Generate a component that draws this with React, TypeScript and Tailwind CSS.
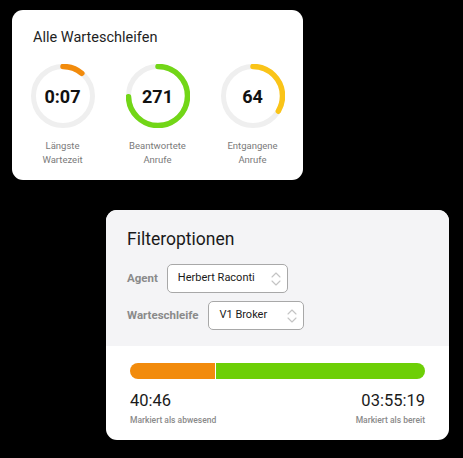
import React from "react";

function Ring({ pct, color, value }: { pct: number; color: string; value: string }) {
  const r = 29.5;
  const c = 2 * Math.PI * r;
  return (
    <div className="relative h-[64px] w-[64px]">
      <svg width="64" height="64" viewBox="0 0 64 64" className="absolute inset-0">
        <circle cx="32" cy="32" r={r} fill="none" stroke="#efefef" strokeWidth="5" />
        <circle
          cx="32"
          cy="32"
          r={r}
          fill="none"
          stroke={color}
          strokeWidth="5.5"
          strokeLinecap="round"
          strokeDasharray={`${c * pct} ${c}`}
          transform="rotate(-90 32 32)"
        />
      </svg>
      <div className="absolute inset-0 flex items-center justify-center text-[18px] font-bold text-[#111]">
        {value}
      </div>
    </div>
  );
}

function Stat({ pct, color, value, l1, l2 }: { pct: number; color: string; value: string; l1: string; l2: string }) {
  return (
    <div className="flex flex-col items-center">
      <Ring pct={pct} color={color} value={value} />
      <div className="mt-[11px] text-center text-[9.5px] leading-[14px] text-[#7a7a7a]">
        <div>{l1}</div>
        <div>{l2}</div>
      </div>
    </div>
  );
}

function Chevrons() {
  return (
    <svg width="12" height="16" viewBox="0 0 12 16" fill="none" stroke="#c4c4c4" strokeWidth="1.1" strokeLinecap="round" strokeLinejoin="round">
      <path d="M2 6 L6 2 L10 6" />
      <path d="M2 10 L6 14 L10 10" />
    </svg>
  );
}

function Select({ text, w }: { text: string; w: string }) {
  return (
    <div className={`flex h-[29px] items-center justify-between rounded-[5px] border border-[#a8a8a8] bg-white pl-[10px] pr-[5px] ${w}`}>
      <span className="text-[11px] text-[#1a1a1a]">{text}</span>
      <Chevrons />
    </div>
  );
}

export default function App() {
  return (
    <div className="h-[458px] w-[463px] overflow-hidden bg-black" style={{ fontFamily: "Roboto, 'Noto Sans', sans-serif" }}>
      <div className="ml-[12px] pt-[10px]">
        <div className="h-[170px] w-[291px] rounded-[11px] bg-white pt-[19px]">
          <div className="pl-[21px] text-[14.5px] leading-[18px] text-[#1f1f1f]">Alle Warteschleifen</div>
          <div className="mt-[17px] grid w-[288px] grid-cols-3 pl-[3px]">
            <Stat pct={0.11} color="#f28b0c" value="0:07" l1="Längste" l2="Wartezeit" />
            <Stat pct={0.745} color="#72d617" value="271" l1="Beantwortete" l2="Anrufe" />
            <Stat pct={0.335} color="#fac418" value="64" l1="Entgangene" l2="Anrufe" />
          </div>
        </div>
      </div>
      <div className="ml-[106px] mt-[30px] h-[230px] w-[343px] overflow-hidden rounded-[11px] bg-white">
        <div className="h-[136px] bg-[#f4f4f6] pl-[21px] pt-[18px]">
          <div className="text-[17.5px] leading-[22px] text-[#1a1a1a]">Filteroptionen</div>
          <div className="mt-[14px] flex items-center gap-[9px]">
            <span className="text-[11.5px] font-bold text-[#8a8a8a]">Agent</span>
            <Select text="Herbert Raconti" w="w-[121px]" />
          </div>
          <div className="mt-[8px] flex items-center gap-[10px]">
            <span className="text-[11.5px] font-bold text-[#8a8a8a]">Warteschleife</span>
            <Select text="V1 Broker" w="w-[96px]" />
          </div>
        </div>
        <div className="px-[24px] pt-[17px]">
          <div className="flex h-[16px] w-[295px] overflow-hidden rounded-full">
            <div className="h-full w-[85px] bg-[#f28b0c]" />
            <div className="h-full w-[1px] bg-white" />
            <div className="h-full flex-1 bg-[#6dcf06]" />
          </div>
          <div className="mt-[12px] flex justify-between">
            <div>
              <div className="text-[16.5px] leading-[20px] text-[#1a1a1a]">40:46</div>
              <div className="mt-[3px] text-[8.5px] font-medium leading-[12px] text-[#8a8a8a]">Markiert als abwesend</div>
            </div>
            <div className="text-right">
              <div className="text-[16.5px] leading-[20px] text-[#1a1a1a]">03:55:19</div>
              <div className="mt-[3px] text-[8.5px] font-medium leading-[12px] text-[#8a8a8a]">Markiert als bereit</div>
            </div>
          </div>
        </div>
      </div>
    </div>
  );
}
